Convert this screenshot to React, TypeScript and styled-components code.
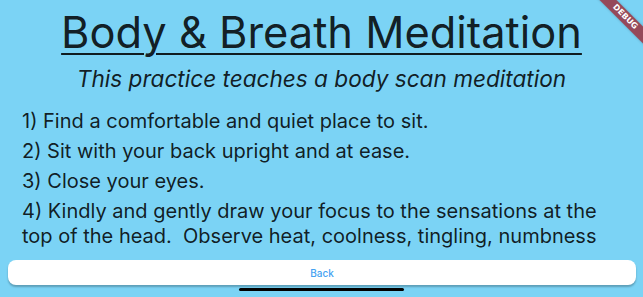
import React from 'react';
import styled, { createGlobalStyle } from 'styled-components';

const GlobalStyle = createGlobalStyle`
  html, body {
    margin: 0;
    padding: 0;
    width: 100%;
    height: 100%;
    overflow: hidden;
  }
  body {
    background: #7bd3f5;
    font-family: Inter, "Noto Sans", sans-serif;
  }
  #root {
    height: 100%;
  }
`;

const steps: string[][] = [
  ['1) Find a comfortable and quiet place to sit.'],
  ['2) Sit with your back upright and at ease.'],
  ['3) Close your eyes.'],
  [
    '4) Kindly and gently draw your focus to the sensations at the',
    'top of the head.\u00a0 Observe heat, coolness, tingling, numbness',
  ],
];

function App() {
  return (
    <Screen>
      <GlobalStyle />
      <Content>
        <Title>Body &amp; Breath Meditation</Title>
        <Subtitle>This practice teaches a body scan meditation</Subtitle>
        <StepList>
          {steps.map((lines, i) => (
            <Step key={i}>
              {lines.map((line, j) => (
                <StepLine key={j}>{line}</StepLine>
              ))}
            </Step>
          ))}
        </StepList>
      </Content>
      <BackButton type="button">Back</BackButton>
      <HomeIndicator />
      <DebugBanner>DEBUG</DebugBanner>
    </Screen>
  );
}

export default App;

const Screen = styled.div`
  position: relative;
  width: 100%;
  height: 100%;
  display: flex;
  flex-direction: column;
  overflow: hidden;
  color: rgba(0, 0, 0, 0.87);
`;

const Content = styled.div`
  flex: 1;
  display: flex;
  flex-direction: column;
  align-items: center;
  padding-top: 7px;
`;

const Title = styled.h1`
  margin: 0;
  font-size: 43.4px;
  font-weight: 400;
  line-height: 50px;
  text-decoration: underline;
  text-decoration-thickness: 2px;
  text-underline-offset: 5px;
`;

const Subtitle = styled.h2`
  margin: 8px 0 0;
  font-size: 22.6px;
  font-style: italic;
  font-weight: 400;
  line-height: 28px;
`;

const StepList = styled.div`
  align-self: stretch;
  display: flex;
  flex-direction: column;
  gap: 5.3px;
  padding: 15.5px 22px 0;
`;

const Step = styled.div`
  display: flex;
  flex-direction: column;
`;

const StepLine = styled.span`
  font-size: 20px;
  line-height: 25px;
  white-space: nowrap;
`;

const BackButton = styled.button`
  margin: 0 7px 12px 8px;
  height: 25px;
  border: none;
  border-radius: 8px;
  background: #fff;
  box-shadow: 0 2px 2px rgba(0, 0, 0, 0.25);
  color: #45a2f2;
  font-family: Inter, "Noto Sans", sans-serif;
  font-size: 10px;
  font-weight: 500;
`;

const HomeIndicator = styled.div`
  position: absolute;
  left: 239px;
  bottom: 6px;
  width: 165px;
  height: 3px;
  border-radius: 2px;
  background: #000;
`;

const DebugBanner = styled.div`
  position: absolute;
  top: 11px;
  right: -22px;
  width: 80px;
  height: 12px;
  transform: rotate(45deg);
  background: rgba(160, 20, 30, 0.72);
  box-shadow: 0 0 3px rgba(0, 0, 0, 0.2);
  color: #fff;
  font-family: "DejaVu Sans", sans-serif;
  font-size: 8px;
  font-weight: 900;
  line-height: 12px;
  text-align: center;
`;
